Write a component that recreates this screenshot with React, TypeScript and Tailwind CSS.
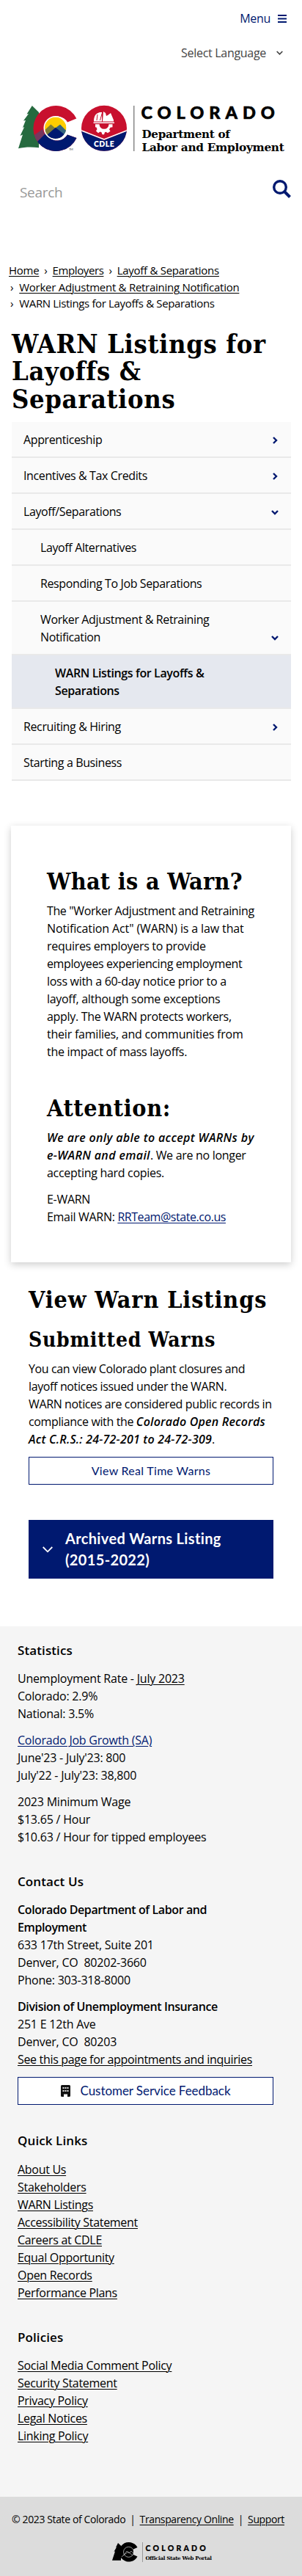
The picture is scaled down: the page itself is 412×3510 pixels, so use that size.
import type { ReactNode } from "react";

const slab = "font-['DejaVu_Serif',serif] font-bold font-stretch-condensed whitespace-nowrap";
const link = "underline decoration-1 underline-offset-2";
const strongItalic = "font-semibold italic tracking-[0.35px]";

function Chevron({ down = false }: { down?: boolean }) {
  return (
    <svg className="h-[10px] w-[10px] shrink-0" viewBox="0 0 10 10" fill="none" stroke="#001970" strokeWidth="2.4">
      <path d={down ? "M1 3l4 4 4-4" : "M3 1l4 4-4 4"} />
    </svg>
  );
}

type NavItem = { label: ReactNode; pad: string; icon?: "right" | "down"; active?: boolean };

const navItems: NavItem[] = [
  { label: "Apprenticeship", pad: "pl-4", icon: "right" },
  { label: "Incentives & Tax Credits", pad: "pl-4", icon: "right" },
  { label: "Layoff/Separations", pad: "pl-4", icon: "down" },
  { label: "Layoff Alternatives", pad: "pl-[39px]" },
  { label: "Responding To Job Separations", pad: "pl-[39px]" },
  { label: <>Worker Adjustment &amp; Retraining<br />Notification</>, pad: "pl-[39px]", icon: "down" },
  { label: <>WARN Listings for Layoffs &amp;<br />Separations</>, pad: "pl-[59px]", active: true },
  { label: "Recruiting & Hiring", pad: "pl-4", icon: "right" },
  { label: "Starting a Business", pad: "pl-4" },
];

const quickLinks = ["About Us", "Stakeholders", "WARN Listings", "Accessibility Statement", "Careers at CDLE", "Equal Opportunity", "Open Records", "Performance Plans"];
const policies = ["Social Media Comment Policy", "Security Statement", "Privacy Policy", "Legal Notices", "Linking Policy"];

function Logo() {
  return (
    <svg className="block h-[70px] w-[370px] overflow-visible" viewBox="24 143 370 70" role="img" aria-label="Colorado Department of Labor and Employment">
      <defs>
        <clipPath id="c-shape">
          <path d="M104.300 161.500 A31 31 0 1 0 104.500 188 L92 183.500 A16.500 16.500 0 1 1 92 166.500 Z" />
        </clipPath>
        <clipPath id="sun"><circle cx="75.800" cy="174.300" r="14.800" /></clipPath>
        <clipPath id="seal"><circle cx="142" cy="174.800" r="31" /></clipPath>
      </defs>
      <path d="M43.800 144L36.500 155.500l2.500-.5-7 9.500 3-.5-4 10 2.200-1-5.700 12 3.500-1.500-6 18.800c9-2 18-2.200 28-1V153z" fill="#266a3f" />
      <g clipPath="url(#c-shape)">
        <rect x="44" y="143" width="64" height="64" fill="#c8102e" />
        <path d="M44 186l14-10 4 10-14 12z" fill="#76375f" />
        <path d="M49 195l13-13 16-3h30v30H50z" fill="#001970" />
      </g>
      <g clipPath="url(#sun)">
        <rect x="60" y="158" width="32" height="32" fill="#ffcd00" />
        <path d="M57 181l12.300-11.500 6 5 6.700-4.700 11 12v12H57z" fill="#7d7d35" />
        <path d="M76 174.500l6-4.700 12 12v8z" fill="#35657f" />
        <path d="M58 189l17.800-15.300L95 189v6H58z" fill="#001970" />
      </g>
      <circle cx="75.800" cy="174.300" r="15.500" fill="none" stroke="#fff" strokeWidth="1.600" />
      <text x="94" y="205" fontSize="4" fontFamily="Lato, sans-serif" fill="#444">TM</text>
      <g clipPath="url(#seal)">
        <rect x="110" y="143" width="64" height="64" fill="#c8102e" />
        <path d="M110 178l32 13 32-13v30h-64z" fill="#001970" />
        <path d="M110 177.500l32 12.500 32-12.500" fill="none" stroke="#fff" strokeWidth="1.600" />
      </g>
      <path d="M128 165.500c0-8 3-11 8-12.500h3v12.500zM140 165.500l1-13.500 3 2 1 4 2-1 4-3 4 9.500v2z" fill="#fff" />
      <path d="M132 164l1-8M136.500 164l3-10.500" stroke="#c8102e" strokeWidth="1" />
      <path d="M127.500 167.300h28.500" stroke="#fff" strokeWidth="1.500" />
      <path d="M130 169.300h5.500a6.500 6.500 0 0 0 13 0h5v4l-3 .5-1.500 2.500 1.500 2.500-3.500 2.500-2.500-1.500-1.500.5-1 3h-2.500l-1-3-2-.7-2.500 1.700-3-2.700 1.500-2.500-1-2.500-1.500-.3z" fill="#fff" />
      <text x="128" y="199.800" fontSize="10.500" fontWeight="800" textLength="27.500" fontFamily="Lato, sans-serif" fill="#fff">CDLE</text>
      <path d="M182.700 144v62" stroke="#8c8c8c" strokeWidth="1.600" />
      <text x="192.500" y="161.700" fontSize="23.500" fontWeight="900" textLength="182" stroke="#000" strokeWidth=".6" fontFamily="Lato, sans-serif">COLORADO</text>
      <text x="193.500" y="188" fontSize="15.500" fontWeight="700" textLength="120" lengthAdjust="spacingAndGlyphs" fontFamily="'DejaVu Serif', serif">Department of</text>
      <text x="193.500" y="206" fontSize="15.500" fontWeight="700" textLength="194" lengthAdjust="spacingAndGlyphs" fontFamily="'DejaVu Serif', serif">Labor and Employment</text>
    </svg>
  );
}

function PortalLogo() {
  return (
    <svg className="block h-8 w-[142px] overflow-visible" viewBox="152 3437 142 32" role="img" aria-label="Colorado Official State Web Portal">
      <path d="M161 3440l-3 6 1-.3-3.500 6 1.500-.3-4 12.300h12v-20z" />
      <path d="M187.500 3446A13.300 13.300 0 1 0 187.500 3458.500L182 3456v-7.500z" />
      <circle cx="175.500" cy="3452.300" r="7" fill="none" stroke="#ddd" strokeWidth=".7" />
      <path d="M166 3459l4-4 3-4 3 3 3-3 5 5M168 3457l7-5 6 5" fill="none" stroke="#ddd" strokeWidth=".6" />
      <path d="M194.500 3439v27" stroke="#999" />
      <text x="198.500" y="3450.500" fontSize="10.500" fontWeight="900" textLength="82" stroke="#000" strokeWidth=".2" fontFamily="Lato, sans-serif">COLORADO</text>
      <text x="198.500" y="3462.500" fontSize="6.800" fontWeight="700" textLength="90" lengthAdjust="spacingAndGlyphs" fontFamily="'DejaVu Serif', serif">Official State Web Portal</text>
    </svg>
  );
}

function FooterHeading({ children }: { children: ReactNode }) {
  return <h3 className="h-6 text-[17px] leading-6 font-semibold tracking-[0.1px]">{children}</h3>;
}

function LinkList({ items }: { items: string[] }) {
  return (
    <ul className="tracking-[-0.3px]">
      {items.map((t) => (
        <li key={t}><a className={link}>{t}</a></li>
      ))}
    </ul>
  );
}

export default function App() {
  return (
    <div className="h-[3510px] w-[412px] overflow-hidden bg-white font-['Open_Sans',sans-serif] text-base leading-6 tracking-[-0.3px] text-black">
      <header className="flex h-[357px] flex-col">
        <div className="flex h-[37px] items-end justify-end gap-[10px] pr-[21px] text-[#001970]">
          <span>Menu</span>
          <svg className="mb-[6px] h-[11px] w-3" viewBox="0 0 12 11"><path d="M0 1h12M0 5.500h12M0 10h12" stroke="#001970" strokeWidth="2" /></svg>
        </div>
        <div className="mt-[23px] flex h-6 items-center justify-end gap-[14px] pr-[26px] text-[#444]">
          <span>Select Language</span>
          <svg className="h-2 w-[9px]" viewBox="0 0 9 8" fill="none" stroke="#444" strokeWidth="1.700"><path d="M.7 2l3.800 3.800L8.300 2" /></svg>
        </div>
        <div className="mt-[59px] pl-6"><Logo /></div>
        <div className="mt-[32px] flex items-start justify-between pr-[15px] pl-[27px]">
          <span className="mt-[3px] text-[19px] leading-7 text-[#999]">Search</span>
          <svg className="h-[25px] w-[25px]" viewBox="0 0 25 25" fill="none" stroke="#001970"><circle cx="10" cy="10" r="8.300" strokeWidth="3.400" /><path d="M16 16l7.500 7.500" strokeWidth="4" /></svg>
        </div>
      </header>

      <nav className="h-[93px] pl-3 text-[15px] leading-[22.5px] tracking-[-0.27px]">
        <div><a className={link}>Home</a><span className="px-[7px]">›</span><a className={`${link} tracking-[-0.4px]`}>Employers</a><span className="px-[7px]">›</span><a className={link}>Layoff &amp; Separations</a></div>
        <div><span className="pr-[8px] pl-[2px]">›</span><a className={link}>Worker Adjustment &amp; Retraining Notification</a></div>
        <div><span className="pr-[8px] pl-[2px]">›</span><span className="tracking-[-0.35px]">WARN Listings for Layoffs &amp; Separations</span></div>
      </nav>

      <h1 className={`${slab} h-[125px] pl-4 text-[36px] leading-[37.4px] tracking-[0.64px]`}>WARN Listings for<br />Layoffs &amp;<br />Separations</h1>

      <ul className="mx-4 w-[381px]">
        {navItems.map((item, i) => (
          <li key={i} className={`flex items-end justify-between border-b-2 border-[#e9e9e9] pt-3 pr-[17px] pb-[11px] tracking-[-0.38px] ${item.pad} ${item.active ? "bg-[#e5e8ef] font-semibold" : "bg-[#fafafa]"}`}>
            <span>{item.label}</span>
            {item.icon && <span className="mb-[6px]"><Chevron down={item.icon === "down"} /></span>}
          </li>
        ))}
      </ul>

      <section className="mt-[61px] ml-[15px] h-[595px] w-[382px] pt-14 pl-[49px] whitespace-nowrap shadow-[0_3px_10px_rgba(0,0,0,0.2)]">
        <h2 className={`${slab} text-[32px] leading-10 tracking-[0.31px]`}>What is a Warn?</h2>
        <p className="mt-2"><span className="tracking-[-0.38px]">The "Worker Adjustment and Retraining</span><br /><span className="tracking-[-0.13px]">Notification Act" (WARN) is a law that</span><br />requires employers to provide<br /><span className="tracking-[-0.4px]">employees experiencing employment</span><br />loss with a 60-day notice prior to a<br />layoff, although some exceptions<br />apply. The WARN protects workers,<br /><span className="tracking-[-0.22px]">their families, and communities from</span><br />the impact of mass layoffs.</p>
        <h2 className={`${slab} mt-[45px] text-[32px] leading-10 tracking-[0.64px]`}>Attention:</h2>
        <p className="mt-2"><b className={strongItalic}>We are only able to accept WARNs by<br />e-WARN and email</b>. We are no longer<br />accepting hard copies.</p>
        <p className="mt-3">E-WARN<br />Email WARN: <a className={`${link} tracking-[-0.45px] text-[#001970]`}>RRTeam@state.co.us</a></p>
      </section>

      <main className="mt-[31px] ml-[39px] w-[334px] whitespace-nowrap">
        <h2 className={`${slab} text-[32px] leading-10 tracking-[0.9px]`}>View Warn Listings</h2>
        <h3 className={`${slab} mt-[17px] text-[28px] leading-9 tracking-[0.75px]`}>Submitted Warns</h3>
        <p className="mt-[9px] tracking-[-0.37px]">You can view Colorado plant closures and<br />layoff notices issued under the WARN.<br />WARN notices are considered public records in<br />compliance with the <b className="font-semibold tracking-[0.21px] italic">Colorado Open Records<br />Act C.R.S.: 24-72-201 to 24-72-309</b>.</p>
        <a className="mt-3 flex h-[38px] items-center justify-center border border-[#001970] font-['Lato',sans-serif] tracking-[0.29px] text-[#001970]">View Real Time Warns</a>
        <div className="mt-12 flex h-20 items-center bg-[#001970] pl-[19px] font-['Lato',sans-serif] text-[20px] leading-[29.5px] font-bold tracking-[0.35px] text-white">
          <svg className="mr-[17px] h-[14px] w-[14px]" viewBox="0 0 14 14" fill="none" stroke="#fff" strokeWidth="1.800"><path d="M.7 4L7 10.300 13.300 4" /></svg>
          <span>Archived Warns Listing<br />(2015-2022)</span>
        </div>
      </main>

      <footer className="mt-[65px] h-[1186px] bg-[#f5f5f5] pt-[21px] pr-[39px] pl-6 tracking-[-0.22px]">
        <FooterHeading>Statistics</FooterHeading>
        <p className="mt-[14px]">Unemployment Rate - <a className={link}>July 2023</a><br />Colorado: 2.9%<br />National: 3.5%</p>
        <p className="mt-3"><a className={`${link} text-[#001970]`}>Colorado Job Growth (SA)</a><br />June'23 - July'23: 800<br />July'22 - July'23: 38,800</p>
        <p className="mt-3">2023 Minimum Wage<br />$13.65 / Hour<br />$10.63 / Hour for tipped employees</p>
        <div className="mt-[37px]"><FooterHeading>Contact Us</FooterHeading></div>
        <p className="mt-[14px]"><b className="font-semibold tracking-[-0.39px]">Colorado Department of Labor and<br />Employment</b><br />633 17th Street, Suite 201<br />Denver, CO&nbsp; 80202-3660<br />Phone: 303-318-8000</p>
        <p className="mt-3"><b className="font-semibold tracking-[-0.39px]">Division of Unemployment Insurance</b><br />251 E 12th Ave<br />Denver, CO&nbsp; 80203<br /><a className={`${link} tracking-[-0.33px]`}>See this page for appointments and inquiries</a></p>
        <a className="mt-3 flex h-[38px] items-center justify-center gap-[14px] border border-[#001970] bg-white font-['Lato',sans-serif] text-[17px] tracking-[-0.06px] text-[#001970]">
          <svg className="h-4 w-[13px]" viewBox="0 0 13 16"><path d="M1.500 0h10A1.500 1.500 0 0 1 13 1.500v13a1.500 1.500 0 0 1-1.500 1.500H9v-3.500H4V16H1.500A1.500 1.500 0 0 1 0 14.500v-13A1.500 1.500 0 0 1 1.500 0z" fill="#111" /><path d="M2.500 3h2v2h-2zM5.500 3h2v2h-2zM8.500 3h2v2h-2zM2.500 7h2v2h-2zM5.500 7h2v2h-2zM8.500 7h2v2h-2z" fill="#ddd" /></svg>
          Customer Service Feedback
        </a>
        <div className="mt-[37px] mb-[15px]"><FooterHeading>Quick Links</FooterHeading></div>
        <LinkList items={quickLinks} />
        <div className="mt-[37px] mb-[14px]"><FooterHeading>Policies</FooterHeading></div>
        <LinkList items={policies} />
      </footer>

      <div className="h-[108px] bg-[#dcdcdc] pt-[21px]">
        <div className="mr-[24px] ml-4 flex justify-between text-[14px] leading-5 tracking-[-0.38px] whitespace-nowrap">
          <span>© 2023 State of Colorado</span>
          <span>|</span>
          <a className={link}>Transparency Online</a>
          <span>|</span>
          <a className={link}>Support</a>
        </div>
        <div className="mt-[19px] pl-[152px]"><PortalLogo /></div>
      </div>
    </div>
  );
}
